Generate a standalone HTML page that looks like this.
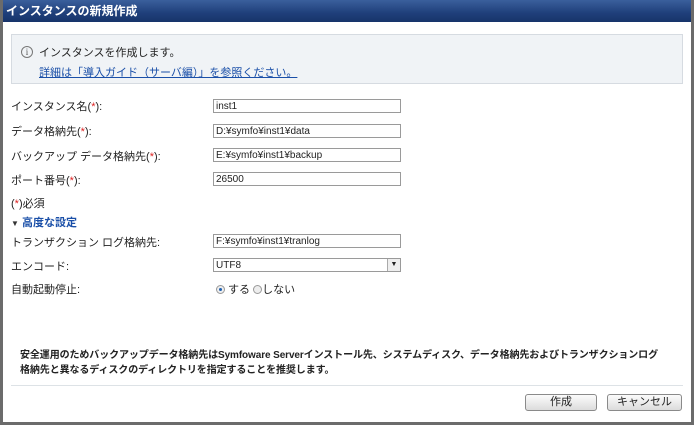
<!DOCTYPE html>
<html><head><meta charset="utf-8"><style>
*{margin:0;padding:0;box-sizing:border-box}
body{width:694px;height:425px;overflow:hidden;background:#fff;font-family:"Liberation Sans","Noto Sans CJK JP",sans-serif;font-size:11px;color:#222;position:relative}
.frame{position:absolute;left:0;top:0;width:694px;height:425px;border:3px solid #6b6b6b;border-top:none}
.title{position:absolute;left:0;top:0;width:694px;height:22px;background:linear-gradient(#3a5f9c,#1f3f7a 60%,#17346a);color:#fff;font-weight:bold;font-size:12px;line-height:22px;padding-left:6px}
.info{position:absolute;left:11px;top:34px;width:672px;height:50px;background:#f0f3f6;border:1px solid #d6dbe1}
.ic{position:absolute;left:9px;top:11px;width:12px;height:12px;border:1px solid #777;border-radius:50%;font-size:9px;line-height:10px;text-align:center;color:#555;font-family:"Liberation Serif",serif}
.a{position:absolute;font-size:11px;white-space:nowrap}
.lnk{color:#1a4fa8;text-decoration:underline}
.in{position:absolute;left:213px;width:188px;height:14px;border:1px solid #9a9a9a;background:#fff;font-size:10px;line-height:14px;padding-left:2px}
.r{color:#d22}
.btn{position:absolute;top:394px;height:17px;border:1px solid #8a8a8a;border-radius:3px;background:linear-gradient(#fbfbfb,#dcdcdc);font-size:11px;text-align:center;line-height:15px}
.rad{display:inline-block;width:9px;height:9px;border:1px solid #999;border-radius:50%;vertical-align:-1px;background:#eee;position:relative}
.b{position:absolute;left:20px;font-weight:bold;font-size:10px;white-space:nowrap;letter-spacing:-0.1px}
</style></head><body>
<div class="title">インスタンスの新規作成</div>
<div class="frame"></div>
<div class="info"><div class="ic">i</div>
<div class="a" style="left:27px;top:9px">インスタンスを作成します。</div>
<div class="a lnk" style="left:27px;top:29px">詳細は「導入ガイド（サーバ編）」を参照ください。</div></div>
<div class="a" style="left:11px;top:98px">インスタンス名(<span class="r">*</span>):</div>
<div class="in" style="top:99px">inst1</div>
<div class="a" style="left:11px;top:123px">データ格納先(<span class="r">*</span>):</div>
<div class="in" style="top:124px">D:¥symfo¥inst1¥data</div>
<div class="a" style="left:11px;top:148px">バックアップ データ格納先(<span class="r">*</span>):</div>
<div class="in" style="top:148px">E:¥symfo¥inst1¥backup</div>
<div class="a" style="left:11px;top:172px">ポート番号(<span class="r">*</span>):</div>
<div class="in" style="top:172px">26500</div>
<div class="a" style="left:11px;top:195px">(<span class="r">*</span>)必須</div>
<div class="a" style="left:11px;top:214px;color:#1a4fa8;font-weight:bold"><span style="font-size:8px;color:#333">▼</span> 高度な設定</div>
<div class="a" style="left:11px;top:234px">トランザクション ログ格納先:</div>
<div class="in" style="top:234px">F:¥symfo¥inst1¥tranlog</div>
<div class="a" style="left:11px;top:258px">エンコード:</div>
<div class="in" style="top:258px">UTF8<span style="position:absolute;right:0;top:0;width:13px;height:12px;border-left:1px solid #aaa;background:#eee;font-size:7px;text-align:center;line-height:12px">▼</span></div>
<div class="a" style="left:11px;top:281px">自動起動停止:</div>
<div class="a" style="left:216px;top:281px"><span class="rad"><span style="position:absolute;left:2px;top:2px;width:3px;height:3px;border-radius:50%;background:#1d5fb0"></span></span> する <span class="rad"></span>しない</div>
<div class="b" style="top:346px">安全運用のためバックアップデータ格納先はSymfoware Serverインストール先、システムディスク、データ格納先およびトランザクションログ</div>
<div class="b" style="top:361px">格納先と異なるディスクのディレクトリを指定することを推奨します。</div>
<div style="position:absolute;left:11px;top:385px;width:672px;height:1px;background:#dde2e6"></div>
<div class="btn" style="left:525px;width:72px">作成</div>
<div class="btn" style="left:607px;width:75px">キャンセル</div>
</body></html>
